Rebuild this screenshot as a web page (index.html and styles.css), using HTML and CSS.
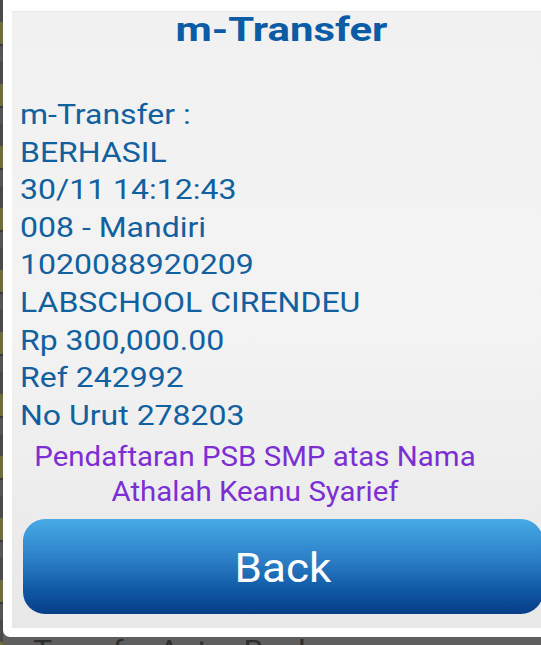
FILE: index.html
```html
<!DOCTYPE html>
<html>
<head>
<meta charset="utf-8">
<link rel="stylesheet" href="styles.css">
</head>
<body>
<div class="screen">
  <div class="dialog">
    <div class="panel">
      <h1 class="title"><span class="stretch-title">m-Transfer</span></h1>
      <div class="details">
        <div class="line">m-Transfer :</div>
        <div class="line">BERHASIL</div>
        <div class="line">30/11 14:12:43</div>
        <div class="line">008 - Mandiri</div>
        <div class="line">1020088920209</div>
        <div class="line">LABSCHOOL CIRENDEU</div>
        <div class="line">Rp 300,000.00</div>
        <div class="line">Ref 242992</div>
        <div class="line">No Urut 278203</div>
      </div>
      <div class="note">Pendaftaran PSB SMP atas Nama<br>Athalah Keanu Syarief</div>
      <button class="back"><span class="back-label">Back</span></button>
    </div>
  </div>
  <div class="behind">Transfer Antar Bank</div>
</div>
</body>
</html>
```

FILE: styles.css
```css
html, body {
  margin: 0;
  padding: 0;
}
body {
  width: 541px;
  height: 645px;
  overflow: hidden;
  background: #585858;
  font-family: Roboto, "Liberation Sans", sans-serif;
}
.screen {
  height: 645px;
  overflow: hidden;
  background:
    linear-gradient(to right, transparent 0, transparent 3px, #5e5e5e 3px),
    repeating-linear-gradient(to bottom, #4a4a4a 0, #4a4a4a 22px, #6f6c40 22px, #6f6c40 44px, #3a3a3a 44px, #3a3a3a 46px, #555 46px, #555 62px);
}
.dialog {
  margin-left: 3px;
  width: 560px;
  height: 637px;
  box-sizing: border-box;
  background: #ffffff;
  border-radius: 0 0 0 7px;
  padding: 11px 0 9px 9px;
}
.panel {
  height: 617px;
  box-sizing: border-box;
  background: linear-gradient(to bottom, #f1f1f1 0%, #f3f3f3 50%, #e8e8e8 100%);
  box-shadow: inset 0 1px 1px rgba(0,0,0,0.04);
  padding: 0 11px 0 8px;
  display: flex;
  flex-direction: column;
}
.title {
  margin: 0;
  width: 522px;
  text-align: center;
  font-size: 33px;
  line-height: 38px;
  font-weight: 700;
  color: #0b5ba5;
}
.stretch-title {
  display: inline-block;
  transform: scaleX(1.27);
  transform-origin: center;
}
.details {
  margin-top: 48px;
  font-size: 27px;
  line-height: 37.6px;
  color: #11609f;
}
.line {
  transform: scaleX(1.185);
  transform-origin: left center;
}
.note {
  margin-top: 5px;
  width: 470px;
  text-align: center;
  font-size: 27px;
  line-height: 35px;
  color: #7b2fd3;
  transform: scaleX(1.09);
  transform-origin: center;
}
.back {
  margin: 9px 0 0 3px;
  width: 520px;
  height: 95px;
  border: none;
  border-radius: 22px;
  background: linear-gradient(to bottom, #47aae6 0%, #2a7cc4 45%, #0f58a4 75%, #073e88 100%);
  color: #ffffff;
  font-family: Roboto, "Liberation Sans", sans-serif;
  font-size: 40px;
  padding: 4px 0 0 0;
  display: flex;
  align-items: center;
  justify-content: center;
}
.back-label {
  display: inline-block;
  transform: scaleX(1.1);
}
.behind {
  margin: 0 0 0 33px;
  font-size: 27px;
  line-height: 28px;
  color: #2e2e2e;
  height: 8px;
  transform: scaleX(1.18);
  transform-origin: left top;
}
```
